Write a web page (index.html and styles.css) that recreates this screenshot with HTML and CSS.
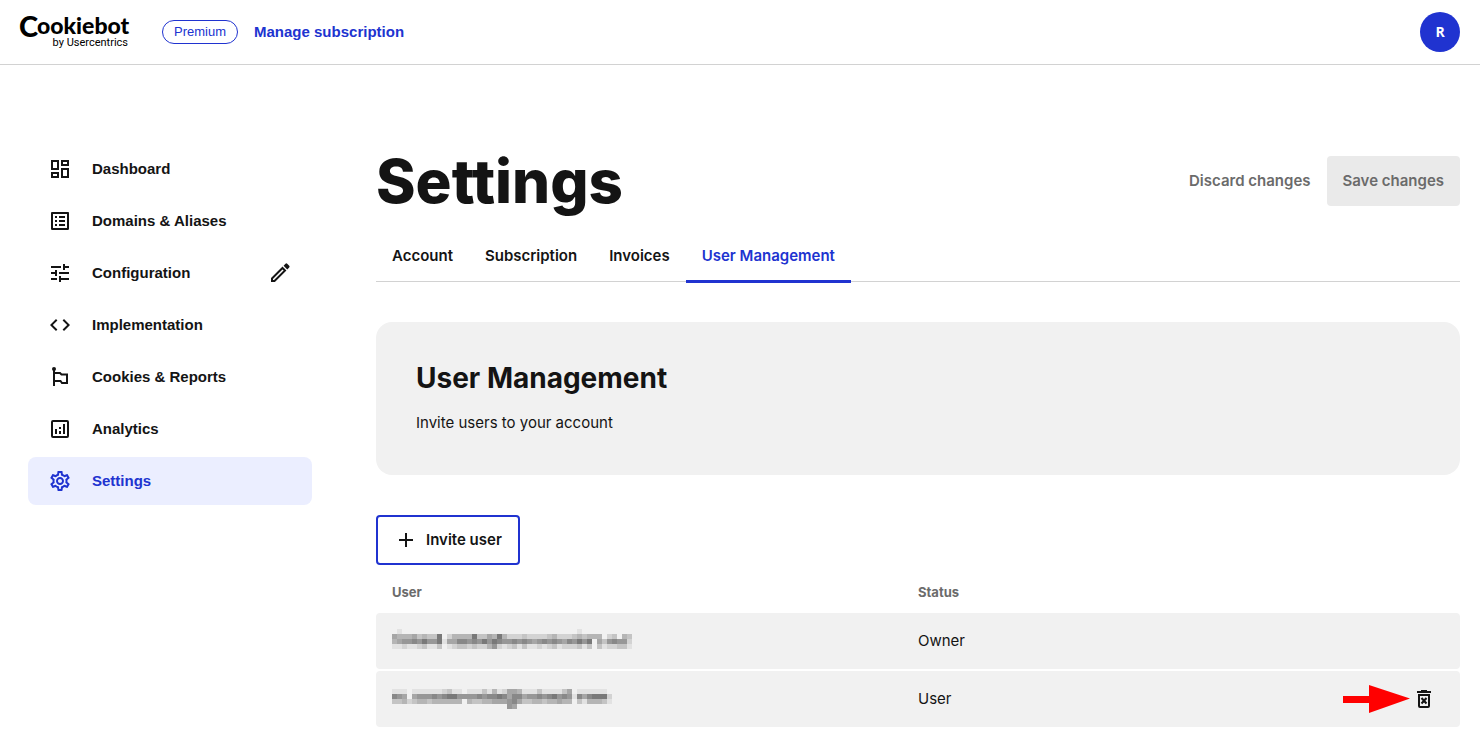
FILE: index.html
```html
<!doctype html>

<html lang="en">
<head>
  <meta charset="utf-8">

  <title>Settings - User Management</title>

  <link rel="stylesheet" href="styles.css">
</head>

<body>
  <header class="header">
    <a href="#" class="logo" aria-label="Cookiebot by Usercentrics">
      <svg width="112" height="36" viewBox="0 0 112 36">
        <text class="logo-name logo-c" x="-1" y="23">C</text>
        <text class="logo-name" x="17" y="20">ookiebot</text>
        <text class="logo-by" x="108" y="32" text-anchor="end">by Usercentrics</text>
      </svg>
    </a>
    <span class="plan">Premium</span>
    <a href="#" class="manage">Manage subscription</a>
    <button type="button" class="avatar">R</button>
  </header>

  <div class="page">
    <nav class="sidebar">
      <a href="#" class="nav-item">
        <svg class="icon" viewBox="0 0 24 24"><path d="M19 5v2h-4V5h4M9 5v6H5V5h4m10 8v6h-4v-6h4M9 17v2H5v-2h4M21 3h-8v6h8V3zM11 3H3v10h8V3zm10 8h-8v10h8V11zm-10 4H3v6h8v-6z"/></svg>
        <span>Dashboard</span>
      </a>
      <a href="#" class="nav-item">
        <svg class="icon" viewBox="0 0 24 24"><path d="M19 5v14H5V5h14m1.100-2H3.900c-.5 0-.9.4-.9.9v16.200c0 .4.4.9.9.9h16.200c.4 0 .9-.5.9-.9V3.900c0-.5-.5-.9-.9-.9zM11 7h6v2h-6V7zm0 4h6v2h-6v-2zm0 4h6v2h-6zM7 7h2v2H7zm0 4h2v2H7zm0 4h2v2H7z"/></svg>
        <span>Domains &amp; Aliases</span>
      </a>
      <div class="nav-row">
        <a href="#" class="nav-item">
          <svg class="icon" viewBox="0 0 24 24"><path d="M3 17v2h6v-2H3zM3 5v2h10V5H3zm10 16v-2h8v-2h-8v-2h-2v6h2zM7 9v2H3v2h4v2h2V9H7zm14 4v-2H11v2h10zm-6-4h2V7h4V5h-4V3h-2v6z"/></svg>
          <span>Configuration</span>
        </a>
        <button type="button" class="icon-button" aria-label="Edit configuration">
          <svg class="icon" viewBox="0 0 24 24"><path d="M17.500 2.800a1.200 1.200 0 0 1 1.700 0l2 2a1.200 1.200 0 0 1 0 1.700L19.300 8.400l-3.700-3.700z"/><path class="line" d="M4 17.500V20h2.500L17 9.500 14.500 7z"/></svg>
        </button>
      </div>
      <a href="#" class="nav-item">
        <svg class="icon" viewBox="0 0 24 24"><path d="M9.400 16.600L4.800 12l4.600-4.600L8 6l-6 6 6 6 1.400-1.400zm5.200 0l4.600-4.600-4.600-4.600L16 6l6 6-6 6-1.400-1.400z"/></svg>
        <span>Implementation</span>
      </a>
      <a href="#" class="nav-item">
        <svg class="icon" viewBox="0 0 24 24"><circle cx="6" cy="4" r="2"/><path class="line" d="M6 4v17M6 8h6l1.500 1.500H19V18h-5l-1.500-2H6"/></svg>
        <span>Cookies &amp; Reports</span>
      </a>
      <a href="#" class="nav-item">
        <svg class="icon" viewBox="0 0 24 24"><rect class="line" x="4" y="4" width="16" height="16" rx="1"/><path d="M7 12h2v5H7zM11 10h2v2h-2zM11 14h2v3h-2zM15 7h2v10h-2z"/></svg>
        <span>Analytics</span>
      </a>
      <a href="#" class="nav-item active">
        <svg class="icon" viewBox="0 0 24 24"><path d="M19.430 12.980c.04-.32.07-.64.07-.98 0-.34-.03-.66-.07-.98l2.110-1.650c.19-.15.24-.42.12-.64l-2-3.460c-.09-.16-.26-.25-.44-.25-.06 0-.12.01-.17.03l-2.490 1c-.52-.4-1.080-.73-1.690-.98l-.38-2.650C14.460 2.180 14.250 2 14 2h-4c-.25 0-.46.18-.49.42l-.38 2.650c-.61.25-1.170.59-1.690.98l-2.490-1c-.06-.02-.12-.03-.18-.03-.17 0-.34.09-.43.25l-2 3.460c-.13.22-.07.49.12.64l2.110 1.650c-.04.32-.07.65-.07.98 0 .33.03.66.07.98l-2.110 1.650c-.19.15-.24.42-.12.64l2 3.460c.09.16.26.25.44.25.06 0 .12-.01.17-.03l2.490-1c.52.4 1.080.73 1.690.98l.38 2.650c.03.24.24.42.49.42h4c.25 0 .46-.18.49-.42l.38-2.650c.61-.25 1.170-.59 1.690-.98l2.490 1c.06.02.12.03.18.03.17 0 .34-.09.43-.25l2-3.460c.12-.22.07-.49-.12-.64l-2.110-1.650zm-1.980-1.710c.04.31.05.52.05.73 0 .21-.02.43-.05.73l-.14 1.130.89.7 1.080.84-.7 1.210-1.270-.51-1.040-.42-.9.68c-.43.32-.84.56-1.250.73l-1.060.43-.16 1.130-.2 1.350h-1.400l-.19-1.350-.16-1.130-1.060-.43c-.43-.18-.83-.41-1.230-.71l-.91-.7-1.060.43-1.270.51-.7-1.210 1.080-.84.89-.7-.14-1.130c-.03-.31-.05-.54-.05-.74s.02-.43.05-.73l.14-1.130-.89-.7-1.080-.84.7-1.210 1.270.51 1.040.42.9-.68c.43-.32.84-.56 1.250-.73l1.060-.43.16-1.130.2-1.350h1.390l.19 1.350.16 1.130 1.060.43c.43.18.83.41 1.230.71l.91.7 1.060-.43 1.270-.51.7 1.210-1.070.85-.89.7.14 1.130zM12 8c-2.210 0-4 1.790-4 4s1.790 4 4 4 4-1.790 4-4-1.790-4-4-4zm0 6c-1.100 0-2-.9-2-2s.9-2 2-2 2 .9 2 2-.9 2-2 2z"/></svg>
        <span>Settings</span>
      </a>
    </nav>

    <main class="main">
      <div class="title-row">
        <h1>Settings</h1>
        <div class="actions">
          <button type="button" class="btn btn-text" disabled>Discard changes</button>
          <button type="button" class="btn btn-save" disabled>Save changes</button>
        </div>
      </div>

      <nav class="tabs">
        <a href="#">Account</a>
        <a href="#">Subscription</a>
        <a href="#">Invoices</a>
        <a href="#" class="active">User Management</a>
      </nav>

      <section class="panel">
        <h2>User Management</h2>
        <p>Invite users to your account</p>
      </section>

      <button type="button" class="btn btn-invite">
        <svg class="icon" viewBox="0 0 24 24"><path d="M19 13h-6v6h-2v-6H5v-2h6V5h2v6h6v2z"/></svg>
        Invite user
      </button>

      <table class="users">
        <thead>
          <tr>
            <th class="users-name">User</th>
            <th>Status</th>
            <th class="users-action" aria-label="Actions"></th>
          </tr>
        </thead>
        <tbody>
          <tr>
            <td>
              <svg class="mosaic" width="245" height="24" role="img" aria-label="Hidden address" data-rows="010000000000000000000000000000000000010000000000 544453433802444483354842223222234222343444023043344451 456676866815577676868766767656767657686805367662 112112311301233232246212313112123122231303122331"></svg>
            </td>
            <td>Owner</td>
            <td></td>
          </tr>
          <tr>
            <td>
              <svg class="mosaic" width="245" height="20" role="img" aria-label="Hidden address" data-rows="11101111112311011131412554111311113501111110 76505666767886666767787577566767867617578882 33423443444444043344555675334434454403144431 00000000000000000000000650000000000000000000"></svg>
            </td>
            <td>User</td>
            <td>
              <div class="row-actions">
                <svg class="arrow" width="67" height="28" viewBox="0 0 67 28"><path d="M0 11h26V0l41 13.500L26 28V18H0z"/></svg>
                <button type="button" class="icon-button" aria-label="Remove user">
                  <svg class="icon" viewBox="0 0 24 24"><path d="M5 4h4V3h6v1h4v2H5z"/><path class="line" d="M7 8h10v11a1 1 0 0 1-1 1H8a1 1 0 0 1-1-1zM9.500 11l5 5.500M14.500 11l-5 5.500"/></svg>
                </button>
              </div>
            </td>
          </tr>
        </tbody>
      </table>
    </main>
  </div>

  <script src="mosaic.js"></script>
</body>
</html>
```
FILE: styles.css
```css
* {
  box-sizing: border-box;
}

body {
  margin: 0;
  font-family: Inter, "Liberation Sans", sans-serif;
  font-size: 15px;
  line-height: 24px;
  background: #fff;
  color: #141414;
}

a {
  color: inherit;
  text-decoration: none;
}

button {
  padding: 0;
  border: none;
  background: none;
  color: inherit;
  font: inherit;
}

.icon {
  display: block;
  width: 24px;
  height: 24px;
  flex: none;
  fill: currentColor;
}

.icon .line {
  fill: none;
  stroke: currentColor;
  stroke-width: 2;
}

.header {
  display: flex;
  align-items: center;
  height: 65px;
  padding: 0 20px;
  border-bottom: 1px solid #d2d2d2;
  font-family: "Liberation Sans", Arial, sans-serif;
}

.logo {
  margin-right: 30px;
}

.logo svg {
  display: block;
  overflow: visible;
}

.logo-name {
  font-family: Lato, sans-serif;
  font-size: 23px;
  font-weight: 900;
}

.logo-c {
  font-size: 29px;
}

.logo-by {
  font-family: Roboto, sans-serif;
  font-size: 11px;
}

.plan {
  margin-right: 16px;
  padding: 0 11px;
  border: 1px solid #2033d0;
  border-radius: 12px;
  color: #2033d0;
  font-size: 13px;
  line-height: 22px;
}

.manage {
  color: #2033d0;
  font-weight: bold;
}

.avatar {
  width: 40px;
  height: 40px;
  margin-left: auto;
  border-radius: 50%;
  background: #2033d0;
  color: #fff;
  font-family: "Open Sans", sans-serif;
  font-size: 14px;
  font-weight: bold;
}

.page {
  display: flex;
  gap: 64px;
  padding: 80px 20px 20px 28px;
}

.sidebar {
  display: flex;
  flex-direction: column;
  flex: none;
  gap: 4px;
  width: 284px;
  font-family: "Liberation Sans", Arial, sans-serif;
  font-weight: bold;
}

.nav-item {
  display: flex;
  align-items: center;
  gap: 20px;
  height: 48px;
  padding: 0 20px;
  border-radius: 8px;
}

.nav-item.active {
  background: #ebeeff;
  color: #2033d0;
}

.nav-row {
  display: flex;
  align-items: center;
  justify-content: space-between;
  padding-right: 20px;
}

.main {
  flex: 1;
  min-width: 0;
}

.title-row {
  display: flex;
  align-items: flex-start;
  justify-content: space-between;
}

h1 {
  margin: 0;
  font-size: 60px;
  font-weight: 800;
  line-height: 72px;
}

.actions {
  display: flex;
  padding-top: 11px;
}

.btn {
  height: 50px;
  padding: 0 16px;
  border-radius: 4px;
  font-weight: 600;
}

.btn-text,
.btn-save {
  color: #6b6b6b;
}

.btn-save {
  background: #eaeaea;
}

.tabs {
  display: flex;
  height: 65px;
  border-bottom: 1px solid #d2d2d2;
  font-weight: 600;
}

.tabs a {
  height: 66px;
  padding: 27px 16px 0;
}

.tabs .active {
  border-bottom: 3px solid #2033d0;
  color: #2033d0;
}

.panel {
  margin: 40px 0;
  padding: 36px 40px 40px;
  border-radius: 16px;
  background: #f1f1f1;
}

h2 {
  margin: 0 0 13px;
  font-size: 28px;
  font-weight: bold;
  line-height: 40px;
}

.panel p {
  margin: 0;
}

.btn-invite {
  display: flex;
  align-items: center;
  gap: 8px;
  border: 2px solid #2033d0;
}

.users {
  width: 100%;
  margin-top: 6px;
  border-spacing: 0 2px;
  table-layout: fixed;
}

.users th {
  height: 38px;
  padding: 0 16px;
  color: #6b6b6b;
  font-size: 13px;
  font-weight: bold;
  text-align: left;
}

.users td {
  height: 56px;
  padding: 0 16px;
  background: #f1f1f1;
}

.users td:first-child {
  border-radius: 4px 0 0 4px;
}

.users td:last-child {
  padding-right: 24px;
  border-radius: 0 4px 4px 0;
}

.users-name {
  width: 526px;
}

.users-action {
  width: 200px;
}

.mosaic {
  display: block;
}

.row-actions {
  display: flex;
  align-items: center;
  justify-content: flex-end;
  gap: 2px;
}

.arrow {
  fill: #ff0000;
}
```
FILE: mosaic.js
```js
// each digit is one 5px block, 0 = empty, 9 = darkest
document.querySelectorAll('.mosaic').forEach(function (svg) {
  svg.dataset.rows.split(' ').forEach(function (row, y) {
    row.split('').slice(0, 48).forEach(function (level, x) {
      if (level === '0') return;
      var rect = document.createElementNS('http://www.w3.org/2000/svg', 'rect');
      var grey = 241 - level * 15;
      rect.setAttribute('x', x * 5);
      rect.setAttribute('y', y * 5);
      rect.setAttribute('width', 5);
      rect.setAttribute('height', 5);
      rect.setAttribute('fill', 'rgb(' + grey + ',' + grey + ',' + grey + ')');
      svg.appendChild(rect);
    });
  });
});
```
